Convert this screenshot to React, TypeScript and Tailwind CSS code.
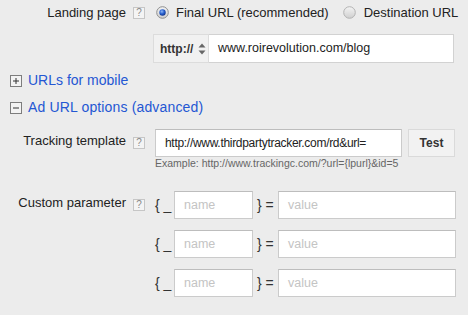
import React from "react";

function Help({ className = "" }: { className?: string }) {
  return (
    <div
      className={`w-[12px] h-[12px] border border-[#c6c6c6] bg-[#f4f4f4] flex items-center justify-center text-[10px] leading-none text-[#8a8a8a] shrink-0 ${className}`}
    >
      ?
    </div>
  );
}

function Radio({ checked = false, className = "" }: { checked?: boolean; className?: string }) {
  return (
    <svg width="13" height="13" viewBox="0 0 13 13" className={`shrink-0 ${className}`}>
      <defs>
        <linearGradient id="rg1" x1="0" y1="0" x2="0" y2="1">
          <stop offset="0" stopColor="#f4f4f4" />
          <stop offset="1" stopColor="#cfcfcf" />
        </linearGradient>
        <radialGradient id="rg2" cx="0.4" cy="0.35" r="0.7">
          <stop offset="0" stopColor="#8fb8f6" />
          <stop offset="0.5" stopColor="#2a62d0" />
          <stop offset="1" stopColor="#0d2f86" />
        </radialGradient>
      </defs>
      <circle cx="6.5" cy="6.5" r="5.8" fill="url(#rg1)" stroke={checked ? "#8e8e8e" : "#b3b3b3"} strokeWidth="1" />
      {checked && <circle cx="6.5" cy="6.5" r="3.2" fill="url(#rg2)" />}
    </svg>
  );
}

function Toggle({ open = false }: { open?: boolean }) {
  return (
    <svg width="12" height="12" viewBox="0 0 12 12" className="shrink-0">
      <rect x="0.5" y="0.5" width="11" height="11" fill="#f3f3f3" stroke="#7d7d7d" />
      <line x1="3" y1="6" x2="9" y2="6" stroke="#333" strokeWidth="1" />
      {!open && <line x1="6" y1="3" x2="6" y2="9" stroke="#333" strokeWidth="1" />}
    </svg>
  );
}

function ParamRow({ first = false }: { first?: boolean }) {
  return (
    <div className="flex h-[28px]">
      <div className="w-[126px] text-right text-[13px] leading-[16px] pt-[4px] shrink-0">
        {first ? "Custom parameter" : ""}
      </div>
      {first ? <Help className="ml-[7px] mt-[8px]" /> : <div className="w-[12px] ml-[7px] shrink-0" />}
      <div className="ml-[10px] w-[19px] text-[14px] leading-[28px] text-[#333] whitespace-pre shrink-0">{"{ _"}</div>
      <div className="w-[79px] h-[28px] bg-white border border-[#cbcbcb] border-t-[#bdbdbd] flex items-center pl-[9px] text-[12.5px] text-[#c4c4c4] shrink-0">
        name
      </div>
      <div className="ml-[4px] w-[21px] text-[14px] leading-[28px] text-[#333] whitespace-pre shrink-0">{"} ="}</div>
      <div className="w-[178px] h-[28px] bg-white border border-[#cbcbcb] border-t-[#bdbdbd] flex items-center pl-[9px] text-[12.5px] text-[#c4c4c4] shrink-0">
        value
      </div>
    </div>
  );
}

export default function App() {
  return (
    <div className="w-[468px] h-[315px] bg-[#ececec] font-['Liberation_Sans',Arial,sans-serif] text-[#222] overflow-hidden">
      {/* Landing page */}
      <div className="flex items-center h-[25px] text-[13px]">
        <div className="w-[126px] text-right shrink-0">Landing page</div>
        <Help className="ml-[7px]" />
        <Radio checked className="ml-[11px]" />
        <span className="ml-[7px]">Final URL (recommended)</span>
        <Radio className="ml-[14px]" />
        <span className="ml-[8px]">Destination URL</span>
      </div>

      {/* URL input */}
      <div className="flex mt-[9px] pl-[153px] h-[29px]">
        <div className="w-[56px] h-full bg-[#f1f1f1] border border-[#dcdcdc] flex items-center pl-[6px] shrink-0">
          <span className="text-[12px] font-bold text-[#333]">http://</span>
          <svg width="8" height="12" viewBox="0 0 8 12" className="ml-[5px]">
            <path d="M4 0.5 L7.5 4.5 L0.5 4.5 Z" fill="#666" />
            <path d="M4 11.5 L7.5 7.5 L0.5 7.5 Z" fill="#666" />
          </svg>
        </div>
        <div className="w-[245px] h-full bg-white border border-[#d2d2d2] border-l-0 flex items-center pl-[9px] text-[12.5px] text-[#222] shrink-0">
          www.roirevolution.com/blog
        </div>
      </div>

      {/* URLs for mobile */}
      <div className="flex items-center h-[21px] mt-[7px] pl-[10px]">
        <Toggle />
        <span className="ml-[6px] text-[14px] text-[#2457d3]">URLs for mobile</span>
      </div>

      {/* Ad URL options */}
      <div className="flex items-center h-[21px] mt-[6px] pl-[10px]">
        <Toggle open />
        <span className="ml-[6px] text-[14px] tracking-[0.15px] text-[#2457d3]">Ad URL options (advanced)</span>
      </div>

      {/* Tracking template */}
      <div className="flex h-[28px] mt-[11px]">
        <div className="w-[126px] text-right text-[13px] leading-[16px] pt-[4px] shrink-0">Tracking template</div>
        <Help className="ml-[7px] mt-[8px]" />
        <div className="ml-[10px] w-[247px] h-[28px] bg-white border border-[#cbcbcb] border-t-[#bdbdbd] flex items-center pl-[9px] text-[12px] tracking-[-0.3px] text-[#222] shrink-0 whitespace-nowrap">
          http://www.thirdpartytracker.com/rd&amp;url=
        </div>
        <div className="ml-[6px] w-[47px] h-[28px] bg-[#f2f2f2] border border-[#dadada] flex items-center justify-center text-[12px] font-bold text-[#333] shrink-0">
          Test
        </div>
      </div>
      <div className="pl-[155px] text-[10.5px] leading-[12px] text-[#666] whitespace-nowrap">
        Example: http://www.trackingc.com/?url={"{lpurl}"}&amp;id=5
      </div>

      {/* Custom parameters */}
      <div className="flex flex-col gap-[11px] mt-[22px]">
        <ParamRow first />
        <ParamRow />
        <ParamRow />
      </div>
    </div>
  );
}
